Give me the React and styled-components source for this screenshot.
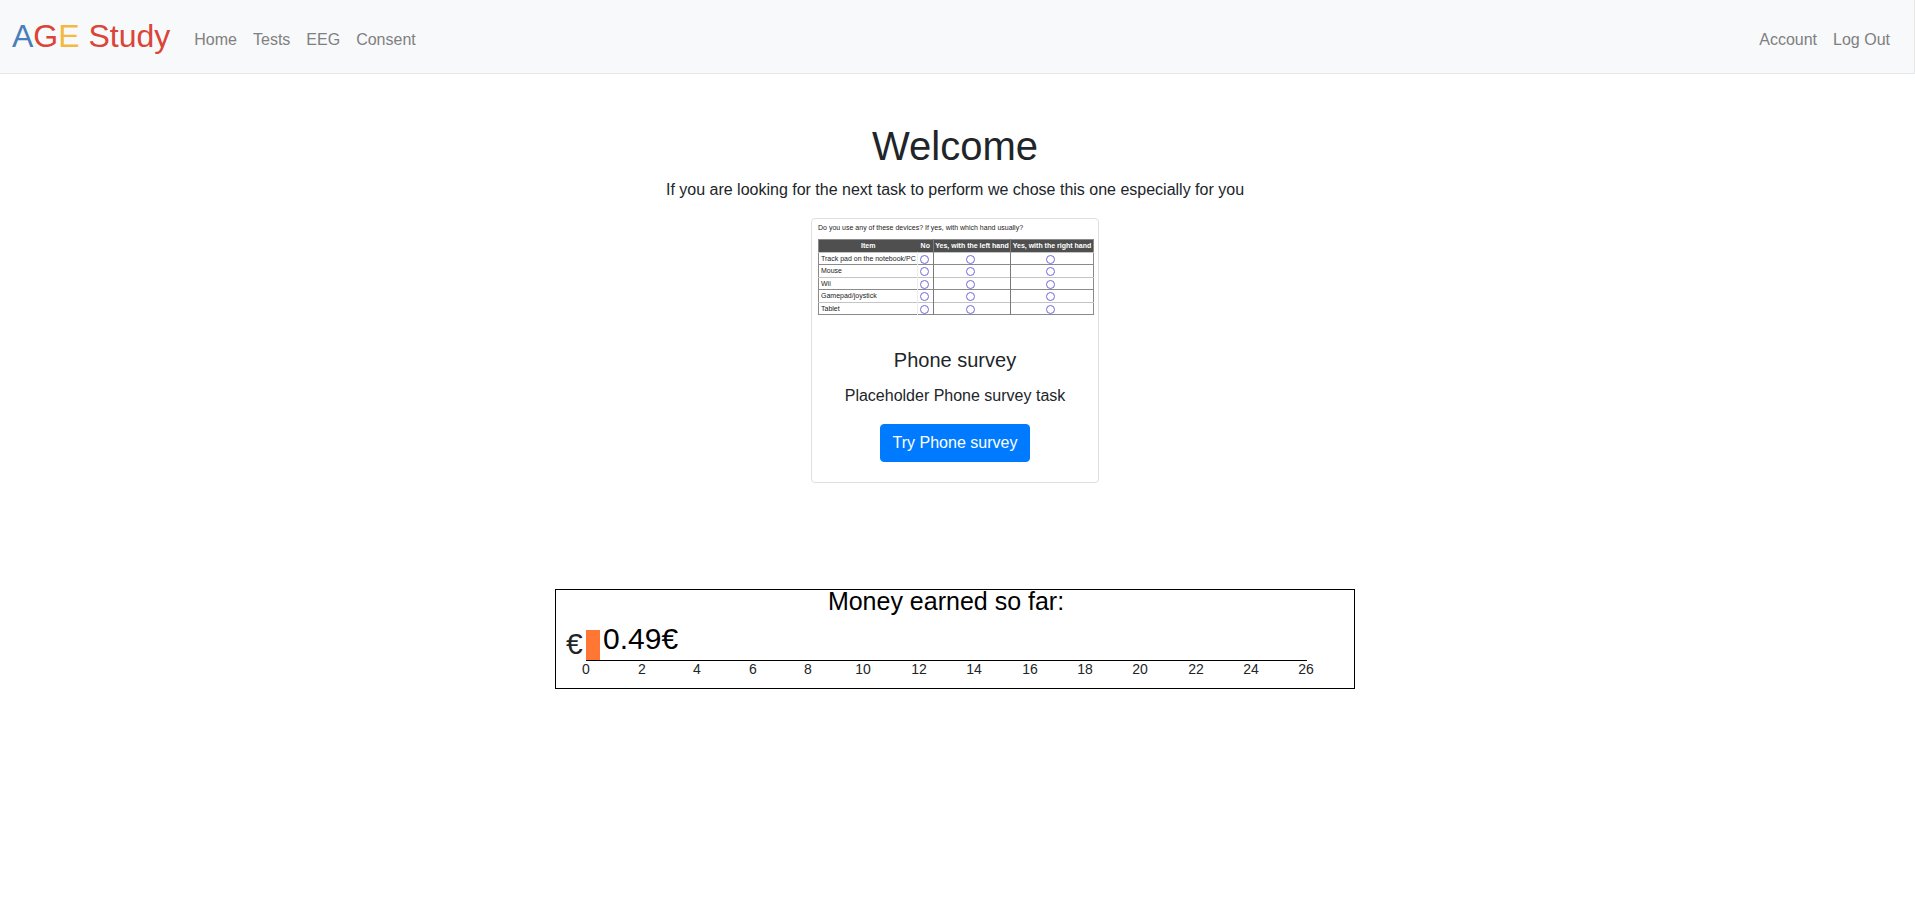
import React from "react";
import styled, { createGlobalStyle } from "styled-components";

const GlobalStyle = createGlobalStyle`
  *, *::before, *::after { box-sizing: border-box; }
  body {
    margin: 0;
    background: #fff;
    color: #212529;
    font: 400 16px/24px "Liberation Sans", Arial, sans-serif;
  }
`;

const Navbar = styled.nav`
  display: flex;
  align-items: center;
  padding: 8px 16px 8px 12px;
  min-height: 74px;
  background: #f8f9fa;
  border: 1px solid #e7e7e7;
  border-width: 0 1px 1px 0;
`;

const Brand = styled.a`
  margin-right: 16px;
  padding-bottom: 2px;
  font-size: 32px;
  line-height: 48px;
  color: #db4437;
  text-decoration: none;
  white-space: nowrap;
`;

const Letter = styled.span`
  color: ${(p) => p.$color};
`;

const NavList = styled.ul`
  display: flex;
  margin: 0;
  margin-left: ${(p) => (p.$end ? "auto" : "0")};
  padding: 6px 0 0;
  list-style: none;
`;

const NavLink = styled.a`
  display: block;
  padding: 8px;
  color: #7f8081;
  text-decoration: none;
  white-space: nowrap;
`;

const Main = styled.main`
  display: flex;
  flex-direction: column;
  align-items: center;
  padding: 48px 5px 0 0;
  text-align: center;
`;

const Heading = styled.h1`
  margin: 0 0 8px;
  font-size: 40px;
  font-weight: 400;
  line-height: 48px;
`;

const Text = styled.p`
  margin: 0 0 16px;
`;

const Card = styled.article`
  width: 288px;
  max-width: 100%;
  border: 1px solid #dfdfdf;
  border-radius: 4px;
  background: #fff;
`;

const Preview = styled.div`
  height: 109px;
  padding: 5px 4px 0 6px;
  font-size: 7px;
  line-height: 8px;
  text-align: left;
  color: #222;
`;

const Question = styled.p`
  margin: 0 0 7px;
  white-space: nowrap;
`;

const SurveyTable = styled.table`
  width: 275px;
  table-layout: fixed;
  border-collapse: collapse;
  border: 1px solid #8a8a8a;
`;

const Col = styled.col`
  width: ${(p) => p.$w}px;
`;

const HeadCell = styled.th`
  height: 13px;
  padding: 0;
  background: #4f4f4f;
  color: #fff;
  text-align: center;
  white-space: nowrap;
  border-left: ${(p) => (p.$ruled ? "1px solid #7a7a7a" : "0")};
`;

const Row = styled.tr`
  height: 12px;
  border-top: 1px solid #c4c4c4;

  &:nth-child(even) {
    height: 13px;
    border-top-color: #8a8a8a;
  }
`;

const Cell = styled.td`
  padding: 0 3px 0 0;
  text-align: center;
  border-left: 1px solid ${(p) => (p.$ruled ? "#7a7a7a" : "#ececec")};
`;

const RowHead = styled.th`
  padding: 0 0 0 2px;
  font-weight: 400;
  text-align: left;
  white-space: nowrap;
`;

const Radio = styled.input`
  appearance: none;
  display: block;
  width: 9px;
  height: 9px;
  margin: 1px auto 0;
  border: 1px solid #7068dc;
  border-radius: 50%;
  background: #fff;
`;

const CardBody = styled.div`
  padding: 20px;
`;

const CardTitle = styled.h2`
  margin: 0 0 12px;
  font-size: 20px;
  font-weight: 400;
  line-height: 24px;
`;

const Button = styled.button`
  padding: 6px 12px;
  border: 1px solid #007bff;
  border-radius: 4px;
  background: #007bff;
  color: #fff;
  font: inherit;
  cursor: pointer;
`;

const Chart = styled.svg`
  display: block;
  width: 800px;
  max-width: 100%;
  margin-top: 106px;
  border: 1px solid #000;
  overflow: visible;
  font-family: "Liberation Sans", Arial, sans-serif;
`;

const answers = ["No", "Yes, with the left hand", "Yes, with the right hand"];
const devices = ["Track pad on the notebook/PC", "Mouse", "Wii", "Gamepad/joystick", "Tablet"];
const earned = 0.49;
const ticks = Array.from({ length: 14 }, (_, i) => i * 2);
const scaleX = (value) => 30 + Math.ceil((value * 720) / 26);

function SurveyPreview() {
  return (
    <Preview>
      <Question>Do you use any of these devices? If yes, with which hand usually?</Question>
      <SurveyTable>
        <colgroup>
          <Col $w={99} />
          <Col $w={16} />
          <Col $w={77} />
          <Col $w={83} />
        </colgroup>
        <thead>
          <tr>
            <HeadCell scope="col">Item</HeadCell>
            {answers.map((answer, i) => (
              <HeadCell key={answer} scope="col" $ruled={i > 0}>{answer}</HeadCell>
            ))}
          </tr>
        </thead>
        <tbody>
          {devices.map((device) => (
            <Row key={device}>
              <RowHead scope="row">{device}</RowHead>
              {answers.map((answer, i) => (
                <Cell key={answer} $ruled={i > 0}>
                  <Radio type="radio" name={device} aria-label={`${device}: ${answer}`} />
                </Cell>
              ))}
            </Row>
          ))}
        </tbody>
      </SurveyTable>
    </Preview>
  );
}

function EarningsChart() {
  return (
    <Chart viewBox="0 0 798 98" role="img" aria-label="Money earned so far">
      <text x="390" y="20" fontSize="25" textAnchor="middle">Money earned so far:</text>
      <text x="10" y="64" fontSize="30" fill="#212529">€</text>
      <rect x="30" y="40" width={scaleX(earned) - 30} height="30" fill="#ff7733" />
      <text x={scaleX(earned) + 3} y="59" fontSize="30">{earned}€</text>
      <path d="M30 70.5H751" stroke="#000" />
      {ticks.map((t) => (
        <text key={t} x={scaleX(t)} y="84" fontSize="14" fill="#212529" textAnchor="middle">{t}</text>
      ))}
    </Chart>
  );
}

export default function App() {
  return (
    <>
      <GlobalStyle />
      <Navbar>
        <Brand href="#">
          <Letter $color="#4a7ebb">A</Letter>
          <Letter $color="#db4437">G</Letter>
          <Letter $color="#f4b942">E</Letter> Study
        </Brand>
        <NavList>
          {["Home", "Tests", "EEG", "Consent"].map((label) => (
            <li key={label}><NavLink href="#">{label}</NavLink></li>
          ))}
        </NavList>
        <NavList $end>
          {["Account", "Log Out"].map((label) => (
            <li key={label}><NavLink href="#">{label}</NavLink></li>
          ))}
        </NavList>
      </Navbar>
      <Main>
        <Heading>Welcome</Heading>
        <Text>If you are looking for the next task to perform we chose this one especially for you</Text>
        <Card>
          <SurveyPreview />
          <CardBody>
            <CardTitle>Phone survey</CardTitle>
            <Text>Placeholder Phone survey task</Text>
            <Button type="button">Try Phone survey</Button>
          </CardBody>
        </Card>
        <EarningsChart />
      </Main>
    </>
  );
}
